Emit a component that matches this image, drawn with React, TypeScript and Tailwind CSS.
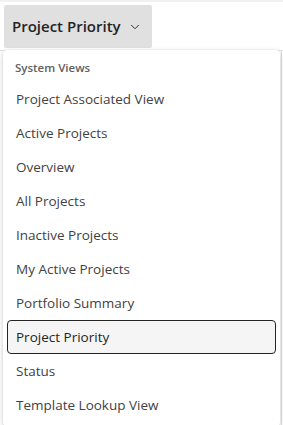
import { ChevronDown } from "lucide-react";

const views = [
  "Project Associated View",
  "Active Projects",
  "Overview",
  "All Projects",
  "Inactive Projects",
  "My Active Projects",
  "Portfolio Summary",
  "Project Priority",
  "Status",
  "Template Lookup View",
];

export default function App() {
  return (
    <div
      className="relative h-[425px] w-[283px] overflow-hidden bg-white text-[#242424]"
      style={{ fontFamily: '"Segoe UI", "Open Sans", "Noto Sans", sans-serif' }}
    >
      <div className="h-[2px] bg-[#f0f0f0]" />
      <div className="flex items-end border-b border-[#e6e6e6] px-1 pt-[3px]">
        <button className="mb-[2px] flex h-[43px] w-[148px] items-center gap-[7px] rounded-[2px] bg-[#e0e0e0] pl-2 text-[15px] font-semibold">
          Project Priority
          <ChevronDown className="h-[14px] w-[14px]" strokeWidth={1.6} />
        </button>
      </div>

      {/* grid column edge behind the flyout */}
      <div className="absolute right-[1px] top-[50px] h-[375px] w-px bg-[#e0e0e0]" />

      <div className="absolute left-[3px] top-[50px] w-[277px] rounded-[4px] bg-white pb-1 shadow-[0_2px_6px_rgba(0,0,0,0.16),0_0_2px_rgba(0,0,0,0.12)]">
        <div className="flex h-[32px] items-center px-3 pt-[4px] text-[11.5px] font-semibold text-[#616161]">
          System Views
        </div>
        <ul className="flex flex-col px-1">
          {views.map((v) => (
            <li
              key={v}
              className={
                v === "Project Priority"
                  ? "flex h-[34px] items-center rounded-[4px] border border-[#242424] bg-[#f5f5f5] px-2 text-[13.5px] text-[#242424]"
                  : "flex h-[34px] items-center px-[9px] text-[13.5px] text-[#424242]"
              }
            >
              {v}
            </li>
          ))}
        </ul>
      </div>
    </div>
  );
}
